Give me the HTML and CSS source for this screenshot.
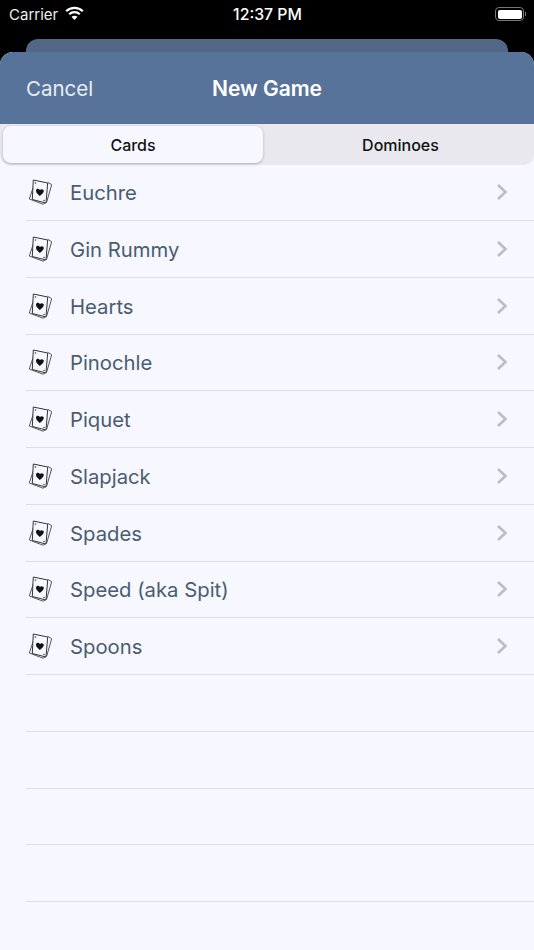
FILE: index.html
```html
<!DOCTYPE html>
<html lang="en">
<head>
    <meta charset="UTF-8">
    <meta name="viewport" content="width=device-width, initial-scale=1.0">
    <title>New Game</title>
    <link rel="stylesheet" href="styles.css">
</head>
<body>
    <svg class="defs">
        <symbol id="cards" viewBox="0 0 24 28">
            <path d="M5.300 9 1.300 21 15 26.200 18.700 24" fill="none" stroke="#444" stroke-width=".9"/>
            <path d="M19.700 4.300l4 2.400L18.700 24" fill="none" stroke="#444" stroke-width=".9"/>
            <path d="M5.300 2 19.700 5 18 25 4.300 21.500z" fill="#f7f8ff" stroke="#333" stroke-width="1" stroke-linejoin="round"/>
            <path d="M11.800 18C9.500 16 7.800 14.600 8 12.500c.2-1.800 2.600-2.300 3.900-.6 1.500-1.400 3.900-.7 3.900 1.200 0 2-2 3.200-4 4.900z" fill="#111"/>
            <circle cx="7.500" cy="5" r=".8" fill="#444"/>
            <circle cx="16" cy="22.500" r=".8" fill="#444"/>
        </symbol>
    </svg>

    <div class="status-bar">
        <div class="status-left">
            <span>Carrier</span>
            <svg class="wifi" viewBox="0 0 19 14">
                <path d="M1.200 5.300C5.800.8 13.200.8 17.800 5.300" fill="none" stroke="#fff" stroke-width="2.200"/>
                <path d="M4.200 8.200c2.900-2.800 7.700-2.800 10.600 0" fill="none" stroke="#fff" stroke-width="2.200"/>
                <path d="M9.500 14 6.500 10.800c1.700-1.500 4.300-1.500 6 0z" fill="#fff"/>
            </svg>
        </div>
        <div class="status-time">12:37 PM</div>
        <div class="status-right">
            <div class="battery"><div class="battery-level"></div></div>
            <div class="battery-nub"></div>
        </div>
    </div>

    <div class="back-sheet"></div>
    <div class="sheet">
        <header class="nav-bar">
            <a class="cancel" href="#">Cancel</a>
            <h1>New Game</h1>
        </header>
        <div class="segments">
            <div class="segment active">Cards</div>
            <div class="segment">Dominoes</div>
        </div>
        <ul class="game-list">
            <li><svg class="card-icon"><use href="#cards"/></svg><span>Euchre</span><svg class="chevron" viewBox="0 0 12 18"><path d="M2 2l7.500 7L2 16"/></svg></li>
            <li><svg class="card-icon"><use href="#cards"/></svg><span>Gin Rummy</span><svg class="chevron" viewBox="0 0 12 18"><path d="M2 2l7.500 7L2 16"/></svg></li>
            <li><svg class="card-icon"><use href="#cards"/></svg><span>Hearts</span><svg class="chevron" viewBox="0 0 12 18"><path d="M2 2l7.500 7L2 16"/></svg></li>
            <li><svg class="card-icon"><use href="#cards"/></svg><span>Pinochle</span><svg class="chevron" viewBox="0 0 12 18"><path d="M2 2l7.500 7L2 16"/></svg></li>
            <li><svg class="card-icon"><use href="#cards"/></svg><span>Piquet</span><svg class="chevron" viewBox="0 0 12 18"><path d="M2 2l7.500 7L2 16"/></svg></li>
            <li><svg class="card-icon"><use href="#cards"/></svg><span>Slapjack</span><svg class="chevron" viewBox="0 0 12 18"><path d="M2 2l7.500 7L2 16"/></svg></li>
            <li><svg class="card-icon"><use href="#cards"/></svg><span>Spades</span><svg class="chevron" viewBox="0 0 12 18"><path d="M2 2l7.500 7L2 16"/></svg></li>
            <li><svg class="card-icon"><use href="#cards"/></svg><span>Speed (aka Spit)</span><svg class="chevron" viewBox="0 0 12 18"><path d="M2 2l7.500 7L2 16"/></svg></li>
            <li><svg class="card-icon"><use href="#cards"/></svg><span>Spoons</span><svg class="chevron" viewBox="0 0 12 18"><path d="M2 2l7.500 7L2 16"/></svg></li>
            <li></li>
            <li></li>
            <li></li>
            <li></li>
        </ul>
    </div>
</body>
</html>
```

FILE: styles.css
```css
body {
    margin: 0;
    background-color: #000;
    font-family: 'Inter', 'Liberation Sans', sans-serif;
    overflow: hidden;
}
.defs {
    display: none;
}
.status-bar {
    display: grid;
    grid-template-columns: 1fr auto 1fr;
    align-items: center;
    height: 28px;
    padding: 0 8px 0 9px;
    color: #fff;
}
.status-left {
    display: flex;
    align-items: center;
    gap: 7px;
    font-size: 15px;
    color: #eee;
}
.wifi {
    width: 19px;
    height: 14px;
    margin-top: -2px;
}
.status-time {
    font-size: 15.8px;
    font-weight: 500;
}
.status-right {
    display: flex;
    align-items: center;
    justify-content: flex-end;
    gap: 1px;
}
.battery {
    width: 24px;
    height: 9px;
    padding: 1.5px;
    border: 1px solid #777;
    border-radius: 4px;
}
.battery-level {
    height: 100%;
    background-color: #fff;
    border-radius: 2px;
}
.battery-nub {
    width: 1px;
    height: 4px;
    background-color: #777;
}
.back-sheet {
    height: 13px;
    margin: 11px 26px 0;
    background-color: #526786;
    border-radius: 12px 12px 0 0;
}
.sheet {
    height: 898px;
    background-color: #f7f8ff;
    border-radius: 13px 13px 0 0;
    overflow: hidden;
}
.nav-bar {
    display: grid;
    grid-template-columns: 1fr auto 1fr;
    align-items: center;
    height: 72px;
    background-color: #587399;
    color: #fff;
}
.nav-bar h1 {
    margin: 0;
    font-size: 21px;
    font-weight: 600;
}
.cancel {
    padding-left: 26px;
    color: #e8ecf4;
    font-size: 20.5px;
    text-decoration: none;
}
.segments {
    display: flex;
    gap: 4px;
    height: 41px;
    padding: 2px 0 0 3px;
    box-sizing: border-box;
    background-color: #e8e8ee;
    border-radius: 0 0 10px 10px;
}
.segment {
    flex: 1;
    display: flex;
    align-items: center;
    justify-content: center;
    height: 37px;
    font-size: 16px;
    font-weight: 500;
    color: #111;
}
.segment.active {
    flex: none;
    width: 260px;
    background-color: #f7f8ff;
    border-radius: 8px;
    box-shadow: 0 1px 3px rgba(0,0,0,0.25);
}
.game-list {
    list-style-type: none;
    margin: -0.7px 0 0;
    padding: 0 0 0 26px;
}
.game-list li {
    display: flex;
    align-items: center;
    height: 55.75px;
    border-bottom: 1px solid #dddde3;
}
.card-icon {
    width: 24px;
    height: 28px;
    margin: 0 18px 0 2px;
    flex: none;
}
.game-list span {
    flex: 1;
    padding-top: 1px;
    font-size: 20.3px;
    color: #4a5c70;
}
.chevron {
    width: 12px;
    height: 18px;
    margin-right: 26px;
    fill: none;
    stroke: #bcbcc2;
    stroke-width: 2.6;
}
```
